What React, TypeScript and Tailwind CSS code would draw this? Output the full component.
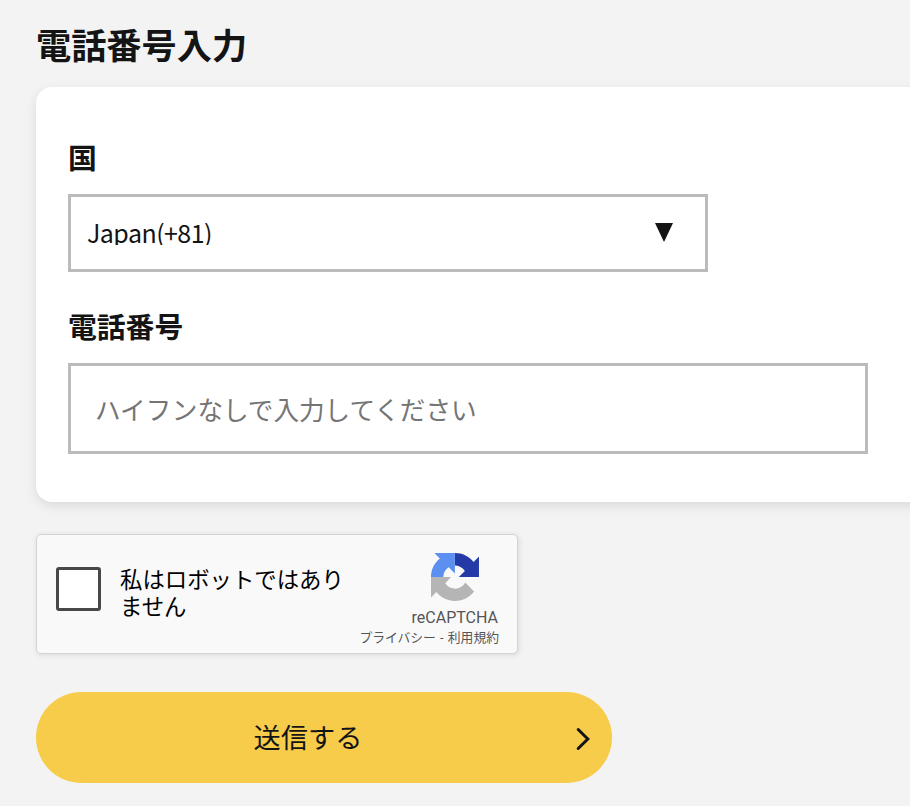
function RecaptchaLogo() {
  return (
    <svg viewBox="0 0 64 64" className="h-12 w-12" aria-hidden="true">
      <path
        fill="#243aa6"
        d="M64 31.955l-.033-1.37V4.687l-7.16 7.16C50.948 4.674 42.033.093 31.862.093V16.6c.485 0 .86.057 1.135.163 4.976.393 9.288 3.14 12.2 7.124l-8.107 8.107L64 31.953"
      />
      <path
        fill="#5b8ff0"
        d="M31.862.094l-1.37.033H4.594l7.16 7.16C4.58 13.147 0 22.06 0 32.046h16.26c0-.485.057-.86.163-1.135.393-4.976 3.14-9.288 7.124-11.828l8.307 8.307z"
      />
      <path
        fill="#b5b5b5"
        d="M.001 32.045l.033 1.37v25.898l7.16-7.16c5.86 7.173 14.774 11.754 24.76 11.754 10.4 0 19.622-4.96 25.458-12.64l-11.736-11.86a15.55 15.55 0 0 1-4.754 5.334c-2.05 1.6-4.952 2.906-8.968 2.906-.485 0-.86-.057-1.135-.163-4.976-.393-9.288-3.14-11.828-7.124l7.607-8.307c-10.522.04-21.7.066-26.595-.005"
      />
    </svg>
  );
}

function Recaptcha() {
  return (
    <div className="mt-8 flex h-[120px] w-[482px] justify-between rounded-[5px] border border-[#d3d3d3] bg-[#f9f9f9] shadow-[1px_1px_5px_1px_rgba(0,0,0,0.08)]">
      <div className="flex pl-[19px]">
        <span className="mt-8 h-11 w-[45px] rounded-[3px] border-3 border-[#484848] bg-white" />
        <p className="mt-[30px] ml-[19px] w-[228px] text-[22.4px] leading-[27px] text-black">
          私はロボットではあり
          <br />
          ません
        </p>
      </div>
      <div className="flex w-[150px] flex-col items-end pt-[18px] pr-[18px] text-[#555]">
        <div className="mr-[20px]">
          <RecaptchaLogo />
        </div>
        <div className="mt-[7px] mr-px font-['Roboto',sans-serif] text-[16px] leading-5">reCAPTCHA</div>
        <div className="font-['Roboto','Noto_Sans_CJK_JP',sans-serif] text-[12.8px] leading-5 [word-spacing:1px] whitespace-nowrap">
          プライバシー - 利用規約
        </div>
      </div>
    </div>
  );
}

export default function App() {
  return (
    <main className="h-[806px] w-[910px] overflow-hidden bg-[#f3f3f3] pl-9 font-['Noto_Sans_CJK_JP',sans-serif] text-[#141414]">
      <h1 className="pt-[18px] text-[35.2px] leading-[52px] font-bold">電話番号入力</h1>

      <section className="mt-[17px] -mr-8 h-[415px] rounded-2xl bg-white pt-[50px] pl-8 shadow-[0_4px_12px_rgba(0,0,0,0.1)]">
        <div className="text-[28.8px] leading-10 font-bold">国</div>
        <div className="mt-[17px] flex h-[78px] w-[640px] items-center justify-between border-3 border-[#bbb] pr-8 pl-4">
          <span className="mt-[-2px] h-[26px] overflow-hidden text-[25px] leading-[27px] tracking-[-0.55px]">Japan(+81)</span>
          <svg viewBox="0 0 18 19" className="mt-[-2px] h-[19px] w-[18px]" aria-hidden="true">
            <path d="M0 0h18L9 19z" fill="#141414" />
          </svg>
        </div>
        <div className="mt-[34px] text-[28.8px] leading-10 font-bold">電話番号</div>
        <input
          placeholder="ハイフンなしで入力してください"
          className="mt-[17px] block h-[91px] w-[800px] border-3 border-[#bbb] px-6 text-[25.6px] placeholder:text-[#757575]"
        />
      </section>

      <Recaptcha />

      <button className="mt-[38px] flex h-[91px] w-[576px] items-center rounded-full bg-[#f7cc4b] pr-[21px] pl-[5px]">
        <span className="mt-[-2px] flex-1 text-center text-[27.2px]">送信する</span>
        <svg viewBox="0 0 16 24" className="mt-[2px] h-6 w-4" fill="none" stroke="#141414" strokeWidth="3" aria-hidden="true">
          <path d="M3.2 2.5l9.6 9.5-9.6 9.5" strokeLinecap="round" />
        </svg>
      </button>
    </main>
  );
}
